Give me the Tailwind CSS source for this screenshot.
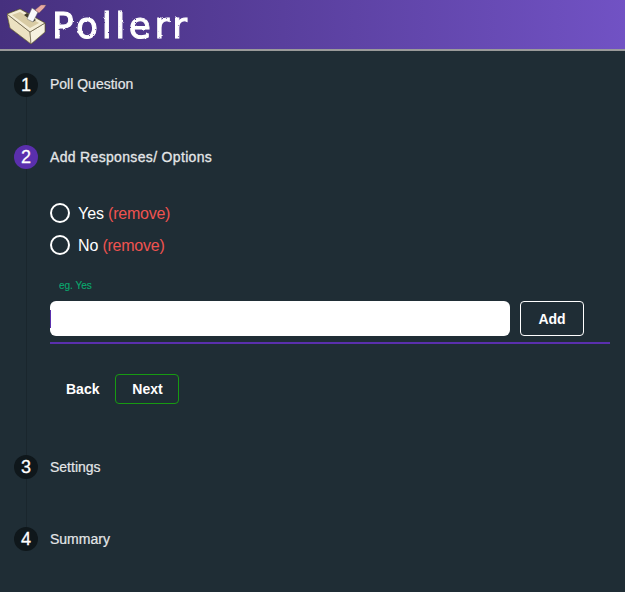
<!DOCTYPE html>
<html lang="en">
<head>
<meta charset="utf-8">
<script src="https://cdn.jsdelivr.net/npm/@tailwindcss/browser@4"></script>
<title>Pollerr</title>
</head>
<body class="m-0 bg-[#1f2d35] font-['Liberation_Sans',Arial,sans-serif] text-white overflow-hidden">
<svg class="absolute w-0 h-0"><filter id="rough" x="-5%" y="-5%" width="110%" height="110%"><feTurbulence type="fractalNoise" baseFrequency="0.3" numOctaves="2" seed="4"/><feDisplacementMap in="SourceGraphic" scale="2.4"/><feGaussianBlur stdDeviation="0.3"/></filter></svg>
<div class="w-[625px] h-[592px] flex flex-col overflow-hidden">
  <header class="h-[51px] shrink-0 flex items-center border-b-2 border-[#9a9a9a] bg-linear-to-r from-[#46307e] to-[#7152c4] pl-[7px]">
    <svg class="w-[46px] h-[46px] shrink-0" viewBox="7 2 46 46">
      <path d="M7 14 L20 9 L45 23 L45 32 L31 44 L10 28 Z" fill="#f2ead0" stroke="#3a3426" stroke-width=".8" stroke-linejoin="round"/>
      <path d="M7 14 L30 32 L31 44 L10 28 Z" fill="#ece2c2" stroke="#6d6348" stroke-width=".7"/>
      <path d="M30 32 L45 23 L45 32 L31 44 Z" fill="#f6f1e0" stroke="#6d6348" stroke-width=".7"/>
      <path d="M7 14 L20 9 L45 23 L30 32 Z" fill="#f4edd6" stroke="#5a5038" stroke-width=".7"/>
      <path d="M12 15 L20 12 L39 23 L30 28 Z" fill="#d8cba4"/>
      <path d="M24 15 L33 22 L36 20 L27 13 Z" fill="#3f3828"/>
      <path d="M27 19 L32 8 L38 12 L33 22 Z" fill="#fafafa" stroke="#666" stroke-width=".5"/>
      <path d="M35 10 L41 5 L46 5 L44 8 L39 13 Z" fill="#e8aaa2" stroke="#7a5a55" stroke-width=".4"/>
    </svg>
    <span class="ml-[-1px] mt-[3px] font-['DejaVu_Sans',sans-serif] text-[36px] leading-none tracking-[3.6px] text-white [-webkit-text-stroke:1px_white] [filter:url(#rough)]">Pollerr</span>
  </header>

  <main class="flex-1 pl-[14px] pt-[22px] flex flex-col">
    <div class="flex items-center h-6">
      <span class="w-6 h-6 rounded-full bg-[#0f171b] flex items-center justify-center text-[18px] pt-px [-webkit-text-stroke:0.3px_white]">1</span>
      <span class="ml-3 text-[14px] text-[#e4e6e8] [-webkit-text-stroke:0.2px_#e4e6e8] -mt-0.5">Poll Question</span>
    </div>
    <div class="h-12 ml-3 border-l border-[#1a262d]"></div>
    <div class="flex items-center h-6">
      <span class="w-6 h-6 rounded-full bg-[#5a2fad] flex items-center justify-center text-[18px] pt-px [-webkit-text-stroke:0.3px_white]">2</span>
      <span class="ml-3 text-[14px] tracking-[0.33px] text-[#e4e6e8] [-webkit-text-stroke:0.3px_#e4e6e8]">Add Responses/ Options</span>
    </div>
    <div class="h-[286px] ml-3 border-l border-[#1a262d] pl-[23px] pt-[34px]">
      <label class="flex items-center h-5 text-[16px]">
        <span class="w-5 h-5 rounded-full border-2 border-white"></span>
        <span class="ml-2 mt-0.5 flex gap-1">Yes <span class="tracking-[-0.25px] text-[#ef5350]">(remove)</span></span>
      </label>
      <label class="flex items-center h-5 mt-3 text-[16px]">
        <span class="w-5 h-5 rounded-full border-2 border-white"></span>
        <span class="ml-2 mt-0.5 flex gap-1">No <span class="tracking-[-0.25px] text-[#ef5350]">(remove)</span></span>
      </label>
      <p class="mt-[25px] ml-[9px] h-[12px] leading-[12px] text-[10px] text-[#0aa86e] [-webkit-text-stroke:0.15px_#0aa86e]">eg. Yes</p>
      <div class="mt-[9px] w-[560px] flex gap-[10px] pb-[6px] border-b-2 border-[#5a2fad]">
        <div class="relative w-[460px] h-[35px] rounded-md bg-white">
          <span class="absolute left-0 top-[9px] w-px h-[18px] bg-[#5a2fad]"></span>
        </div>
        <button class="w-16 h-[35px] pt-0.5 rounded border border-white text-[14px] font-bold">Add</button>
      </div>
      <div class="mt-[30px] flex items-center pl-4 gap-4">
        <button class="text-[14px] font-bold">Back</button>
        <button class="w-16 h-[30px] rounded border border-[#179a12] text-[14px] font-bold">Next</button>
      </div>
    </div>
    <div class="flex items-center h-6">
      <span class="w-6 h-6 rounded-full bg-[#0f171b] flex items-center justify-center text-[18px] pt-px [-webkit-text-stroke:0.3px_white]">3</span>
      <span class="ml-3 text-[14px] text-[#e4e6e8] [-webkit-text-stroke:0.2px_#e4e6e8]">Settings</span>
    </div>
    <div class="h-12 ml-3 border-l border-[#1a262d]"></div>
    <div class="flex items-center h-6">
      <span class="w-6 h-6 rounded-full bg-[#0f171b] flex items-center justify-center text-[18px] pt-px [-webkit-text-stroke:0.3px_white]">4</span>
      <span class="ml-3 text-[14px] text-[#e4e6e8] [-webkit-text-stroke:0.2px_#e4e6e8]">Summary</span>
    </div>
  </main>
</div>
</body>
</html>
